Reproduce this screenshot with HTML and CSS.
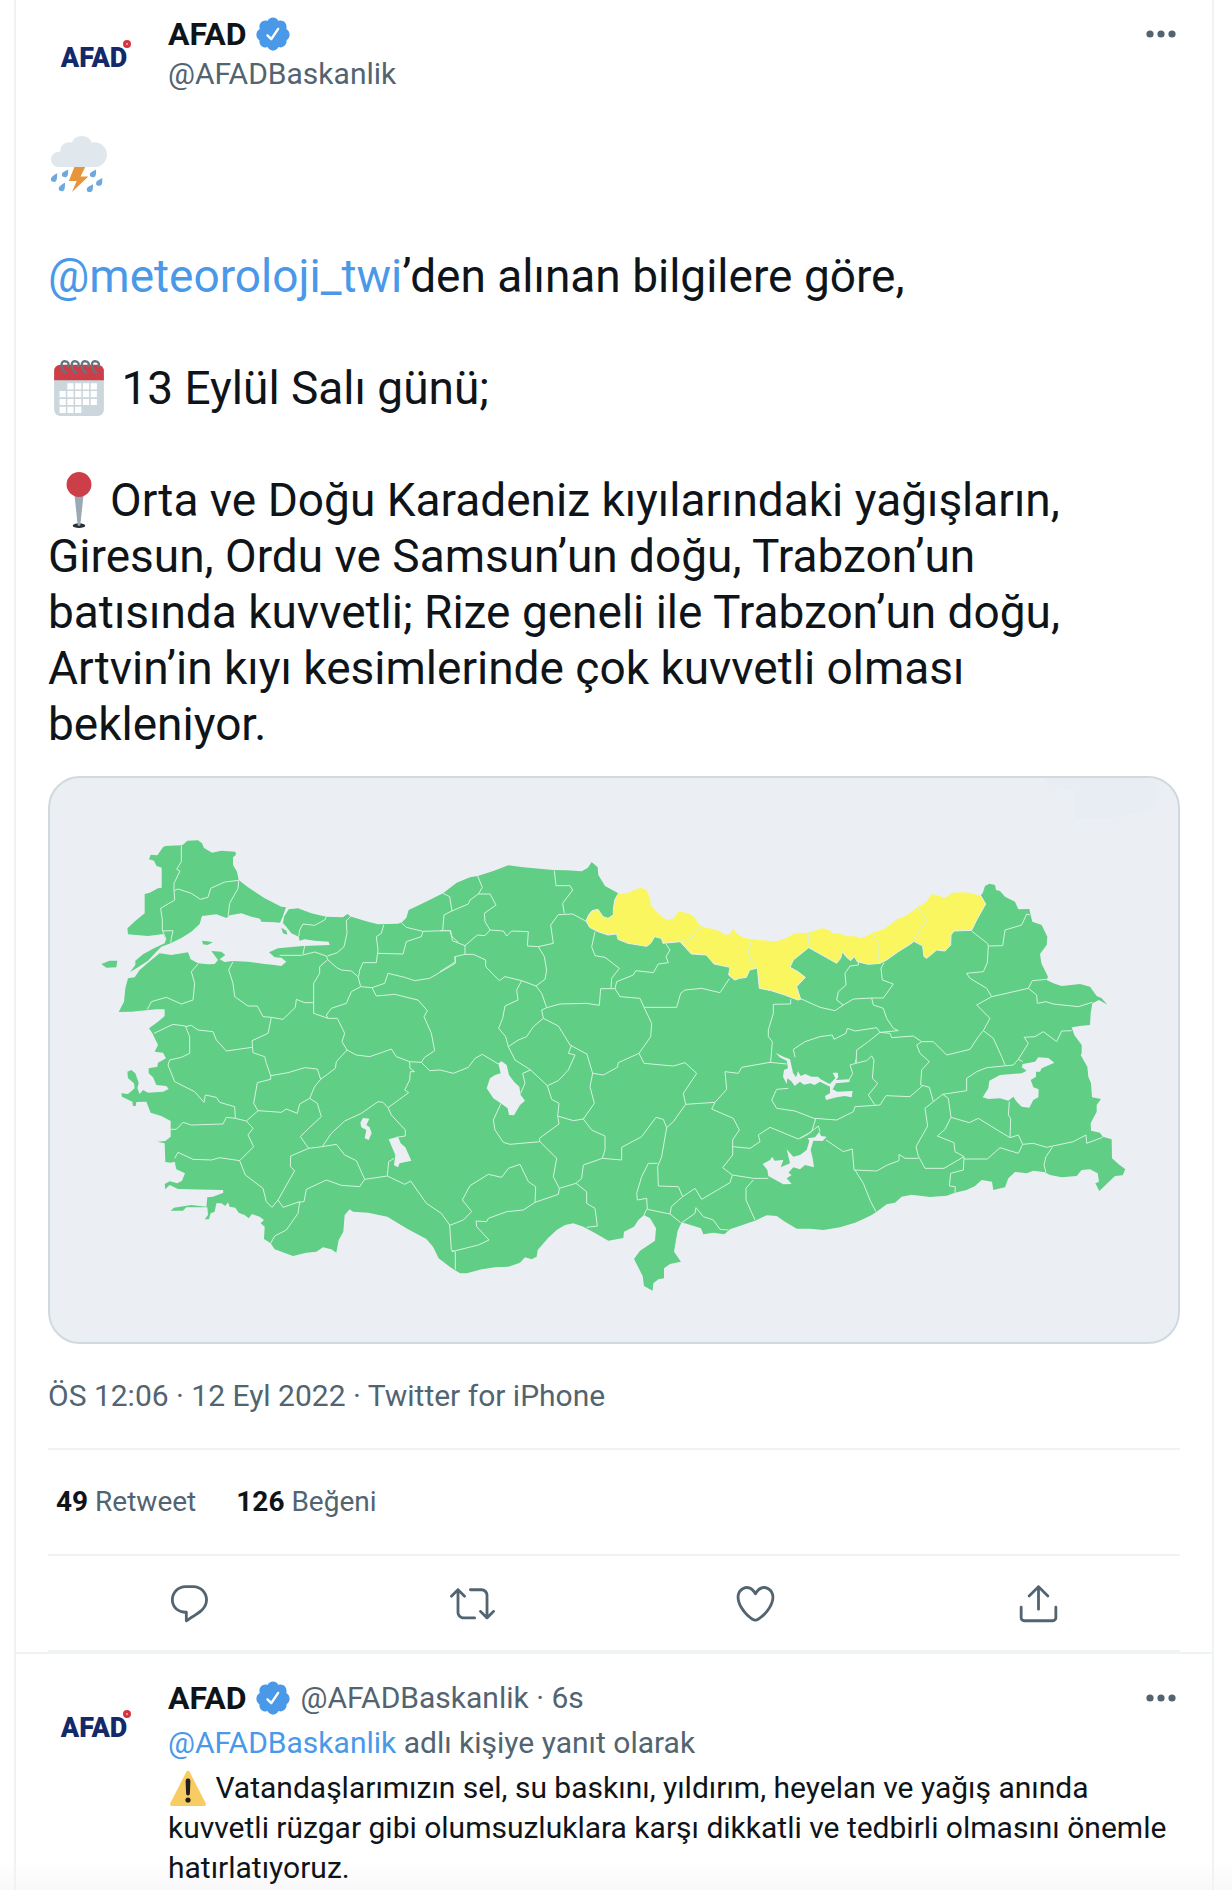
FILE: index.html
```html
<!DOCTYPE html>
<html lang="tr">

<head>
  <meta charset="UTF-8" />
  <meta name="viewport" content="width=device-width, initial-scale=1.0" />
  <title>AFAD (@AFADBaskanlik)</title>
  <link rel="stylesheet" href="styles.css">
</head>

<body>

  <!-- shared icons -->
  <svg class="sprite" aria-hidden="true">
    <symbol id="verified" viewBox="0 0 24 24">
      <path d="M22.5 12.5c0-1.58-.875-2.95-2.148-3.6.154-.435.238-.905.238-1.4 0-2.21-1.71-3.998-3.818-3.998-.47 0-.92.084-1.336.25C14.818 2.415 13.51 1.5 12 1.5s-2.816.917-3.437 2.25c-.415-.165-.866-.25-1.336-.25-2.11 0-3.818 1.79-3.818 4 0 .494.083.964.237 1.4-1.272.65-2.147 2.018-2.147 3.6 0 1.495.782 2.798 1.942 3.486-.02.17-.032.34-.032.514 0 2.21 1.708 4 3.818 4 .47 0 .92-.086 1.335-.25.62 1.334 1.926 2.25 3.437 2.25 1.512 0 2.818-.916 3.437-2.25.415.163.865.248 1.336.248 2.11 0 3.818-1.79 3.818-4 0-.174-.012-.344-.033-.513 1.158-.687 1.943-1.99 1.943-3.484zm-6.616-3.334l-4.334 6.5c-.145.217-.382.334-.625.334-.143 0-.288-.04-.416-.126l-.115-.094-2.415-2.415c-.293-.293-.293-.768 0-1.06s.768-.294 1.06 0l1.77 1.767 3.825-5.74c.23-.345.696-.436 1.04-.207.346.23.44.696.21 1.04z" />
    </symbol>
    <symbol id="more" viewBox="0 0 30 8">
      <circle cx="4" cy="4" r="3.6" />
      <circle cx="15" cy="4" r="3.6" />
      <circle cx="26" cy="4" r="3.6" />
    </symbol>
  </svg>

  <main class="timeline">

    <article class="tweet">
      <header class="tweet-header">
        <div class="avatar"><span class="avatar-logo">AFAD<i class="avatar-flag"></i></span></div>
        <div class="author">
          <div class="author-line"><strong>AFAD</strong><svg class="verified"><use href="#verified" /></svg></div>
          <div class="handle">@AFADBaskanlik</div>
        </div>
        <button class="more-btn" aria-label="Daha fazla"><svg><use href="#more" /></svg></button>
      </header>

      <p class="tweet-text">
        <svg class="emoji" viewBox="0 0 36 36">
          <path fill="#e1e8ed" d="M28 4c-.6 0-1.300.100-1.900.200C25.500 1.800 22.800 0 19.700 0c-3 0-5.500 1.800-6.200 4.200-.6-.2-1.200-.2-1.800-.2C8.500 4 6 6.400 6 9.300v.8C2.600 9.700 0 12 0 15c0 2.800 2.200 5 5 5h23c4.400 0 8-3.600 8-8s-3.600-8-8-8z" />
          <path fill="#e6953a" d="M15 20h7l-3 6h5L13.500 36l3-7h-5z" />
          <path fill="#6fa8de" d="M4 24c0 3 0 5.500-2 5.500S0 28.500 0 27.500 2 25 4 24zM11 21.500c0 3 0 5-2 5S7 25.500 7 24.500s2-2 4-3zM9 30c0 3 0 5.500-2 5.500S5 34.500 5 33.500 7 31 9 30zM29 21.500c0 3 0 5-2 5S25 25.500 25 24.500s2-2 4-3zM33 27c0 3 0 5-2 5S29 31 29 30s2-2 4-3zM27 31c0 3 0 5-2 5S23 35 23 34s2-2 4-3z" />
        </svg><br>
        <br>
        <a href="#">@meteoroloji_twi</a>’den alınan bilgilere göre,<br>
        <br>
        <svg class="emoji" viewBox="0 0 36 36">
          <path fill="#ccd6dd" d="M34 32a4 4 0 0 1-4 4H6a4 4 0 0 1-4-4V10h32z" />
          <path fill="#cc3f48" d="M34 13V7a4 4 0 0 0-4-4H6a4 4 0 0 0-4 4v6z" />
          <path fill="#fff" d="M10.500 15h4v4h-4zM15.500 15h4v4h-4zM20.500 15h4v4h-4zM25.500 15h4v4h-4zM5.500 20h4v4h-4zM10.500 20h4v4h-4zM15.500 20h4v4h-4zM20.500 20h4v4h-4zM25.500 20h4v4h-4zM5.500 25h4v4h-4zM10.500 25h4v4h-4zM15.500 25h4v4h-4zM20.500 25h4v4h-4zM25.500 25h4v4h-4zM5.500 30h4v4h-4zM10.500 30h4v4h-4zM15.500 30h4v4h-4z" />
          <path fill="none" stroke="#66757f" stroke-width="1.500" stroke-linecap="round" d="M9.500 8C7 7 5.500 1 8.500.8s3 2.200 2.500 3.200M16 8c-2.500-1-4-7-1-7.200s3 2.200 2.500 3.200M22.500 8c-2.500-1-4-7-1-7.200s3 2.200 2.500 3.200M29 8c-2.500-1-4-7-1-7.200s3 2.200 2.500 3.200" />
        </svg> 13 Eylül Salı günü;<br>
        <br>
        <svg class="emoji" viewBox="0 0 36 36">
          <ellipse fill="#292f33" cx="18" cy="34.500" rx="4" ry="1.500" />
          <path fill="#99aab5" d="M15 14h6l-2.200 20.500h-1.600z" />
          <circle fill="#cc3f48" cx="18" cy="8" r="8" />
        </svg>Orta ve Doğu Karadeniz kıyılarındaki yağışların,<br>
        Giresun, Ordu ve Samsun’un doğu, Trabzon’un<br>
        batısında kuvvetli; Rize geneli ile Trabzon’un doğu,<br>
        Artvin’in kıyı kesimlerinde çok kuvvetli olması<br>
        bekleniyor.
      </p>

      <div class="media">
        <svg class="map" viewBox="6 24 3384 1692" role="img" aria-label="Türkiye uyarı haritası">
          <path class="map-haze" d="M2981 24h345v80q-50 42-245 42V60q-60 0-100-36z" />

          <g class="land">
            <!-- Trakya -->
            <path d="M303 268L308 254 328 256 345 232 352 228 398 226 405 224 418 212 450 211 462 220 468 234 492 248 520 242 562 245 564 254 555 262 555 285 567 305 572 330 600 352 650 385 700 410 714 412 704 440 696 458 680 457 640 455 636 446 610 440 580 430 545 436 536 444 505 433 462 438 455 462 430 485 400 504 368 520 340 530 325 545 300 572 270 592 246 606 262 585 262 572 285 553 318 535 350 520 354 508 345 492 300 498 240 493 238 475 265 450 290 430 290 372 305 368 330 355 341 353 341 293 325 287 318 272z" />
            <!-- Anadolu -->
            <path d="M722 418L750 415 790 430 835 440 885 442 898 432 910 440 960 455 990 463 1050 461 1062 457 1075 443 1082 420 1120 402 1185 370 1226 338 1266 322 1289 318 1336 303 1381 286 1426 292 1516 300 1556 301 1601 304 1619 294 1631 276 1649 292 1651 315 1671 348 1711 370
              1736 400 1800 440 1860 470 1966 490 2046 510 2126 530 2221 520 2326 500 2436 520 2511 500 2608 440 2691 400 2798 376
              2804 370 2811 348 2824 341 2841 345 2844 360 2856 363 2871 380 2901 395 2911 418 2944 417 2948 435 2953 455 2981 465 2998 500 2996 525 2976 552 2980 580 3000 620 2996 630 3016 640 3041 648 3096 642 3126 650 3146 678 3161 685 3178 704 3153 690 3133 700 3128 730 3126 765 3101 767 3071 772 3079 795 3101 825 3101 850
              3098 855 3118 890 3121 920 3129 940 3132 982 3159 987 3146 1005 3146 1025 3128 1060 3129 1082 3156 1088 3164 1100 3191 1108 3192 1165 3211 1182 3232 1198 3224 1216 3201 1218 3176 1242 3154 1263 3142 1240 3153 1235 3149 1210 3126 1198 3101 1200 3086 1218 3041 1222 3006 1215 2991 1207 2956 1202 2936 1210 2901 1206 2881 1225 2871 1252 2836 1260 2832 1235 2801 1230 2781 1248 2756 1260 2721 1268 2696 1277 2646 1281 2591 1274 2561 1280 2541 1298 2516 1303 2486 1325 2471 1335 2451 1345 2421 1358 2376 1372 2326 1380
              2286 1376 2246 1376 2211 1355 2186 1338 2156 1336 2121 1352 2046 1378 2029 1393 1996 1388 1966 1393 1959 1375 1901 1357 1889 1382 1884 1410 1878 1445 1899 1475 1866 1482 1848 1495 1848 1525 1831 1528 1816 1540 1814 1562 1788 1548 1784 1518 1758 1467 1776 1442 1821 1412 1824 1375 1806 1345 1788 1335 1771 1350 1758 1370 1728 1385 1726 1404 1681 1412 1646 1392 1606 1370 1576 1360 1551 1365 1526 1380 1501 1403 1469 1440 1466 1460 1451 1468 1431 1462 1416 1478 1381 1490 1341 1492 1301 1498 1256 1510 1236 1510 1205 1490
              1172 1465 1155 1430 1135 1407 1075 1375 1018 1340 960 1328 915 1325 905 1318 890 1335 886 1385 872 1410 865 1448 850 1438 825 1432 805 1445 775 1448 735 1458 680 1438 668 1420 648 1407 650 1370 638 1360 648 1350 635 1340 612 1332 602 1345 590 1335 572 1328 562 1313 545 1310 540 1297 532 1308 520 1300 505 1300 500 1325 488 1330 483 1348 470 1348 480 1335 478 1312 415 1312 405 1322 368 1322 378 1313 430 1305 475 1310 478 1282 495 1280 526 1268 525 1260 390 1257 365 1245 352 1258 350 1242 365 1234 388 1240 402 1232 411 1210 385 1198 380 1175 368 1178 352 1176 350 1120 328 1115 352 1113 368 1100 368 1053 340 1038 308 1028 295 995 265 996 263 1008 255 1008 253 995 222 980 220 970 240 972 260 955 258 940 240 925 238 905 250 900 262 910 272 938 268 955 275 972 285 960 300 968 345 965 362 957 355 948 325 945 315 922 302 910 302 895 328 890 330 878 354 865
              345 848 320 845 330 825 318 800 313 790 303 775 330 755 350 738 350 718 325 718 250 725 212 726 228 695 232 655 240 625 260 622 275 600 310 570 335 550 370 555 420 547 428 568 450 580 480 583 500 582 510 570 490 543 520 545 532 555 515 568 530 576 555 573 600 575 650 582 680 585 700 588 715 575 700 563 680 562 663 547 690 535 765 528 845 525 842 515 800 512 770 508 755 512 752 500 730 490 715 470 705 460 708 440z" />
            <!-- adalar -->
            <path d="M160 582L185 572 208 572 205 592 175 593zM462 512L478 514 495 517 478 525 465 523zM700 473L715 482 718 494 705 490z" />
          </g>

          <path class="warning" d="M1711 370L1736 368 1776 352 1796 358 1808 385 1810 405 1831 430 1856 448 1876 445 1891 423 1921 428 1941 440 1951 460 1966 470 2006 478 2034 494 2046 490 2056 474 2068 490 2086 502 2126 508 2186 513 2221 500 2236 490 2281 486 2301 480 2326 473 2346 480 2356 490 2376 488 2396 498 2421 497 2436 503 2456 497 2474 487 2511 474 2546 447 2576 435 2608 410 2634 395 2651 370 2691 382 2714 367 2746 365 2776 370 2798 376
            2813 402 2786 450 2771 481 2718 483 2709 495 2708 525 2691 543 2666 540 2636 565 2628 560 2624 528 2598 514 2591 520 2551 545 2516 570 2496 580 2461 583 2428 575 2419 560 2408 572 2394 560 2383 545 2378 565 2366 580 2286 535 2282 533 2236 570 2226 592 2250 605 2272 622 2246 650 2258 688 2250 690 2210 675 2170 662 2134 655 2128 594 2105 600 2095 622 2075 625 2060 630 2042 615 2046 592 1998 582 1975 555 1930 552 1896 515 1845 520 1840 505 1820 500 1808 520 1796 529 1740 520 1710 508 1706 492 1680 495 1650 485 1625 472 1614 453 1622 435 1632 422 1650 418 1665 440 1680 445 1696 435 1696 420 1700 390z" />

          <g class="lakes">
            <path d="M1351 880L1361 874 1376 885 1383 915 1398 935 1414 950 1418 975 1431 992 1416 1005 1398 1036 1383 1035 1379 1015 1356 998 1336 985 1316 955 1326 925 1341 915 1358 910z" />
            <path d="M937 1058L945 1044 964 1046 955 1065 965 1072 971 1090 962 1110 950 1105 955 1080 940 1072z" />
            <path d="M1022 1108L1050 1100 1058 1120 1072 1132 1090 1172 1055 1180 1050 1192 1038 1186 1042 1155z" />
            <path d="M2804 982L2821 955 2824 932 2856 915 2921 910 2936 902 2921 892 2924 882 2961 875 2971 862 3001 864 3019 878 2981 895 2976 905 2964 905 2964 920 2948 930 2956 952 2972 958 2971 982 2956 990 2944 1013 2921 1010 2906 995 2896 980 2881 992 2856 985 2821 987z" />
            <path d="M2183 848L2206 860 2226 868 2231 890 2235 908 2244 922 2250 904 2258 918 2272 912 2290 920 2310 920 2318 928 2345 942 2362 925 2354 908 2369 908 2371 922 2364 930 2406 928 2404 936 2364 940 2354 958 2368 965 2414 963 2411 982 2390 978 2366 982 2334 990 2331 978 2346 970 2346 950 2316 935 2300 945 2286 940 2268 944 2256 935 2240 948 2230 934 2218 925 2216 942 2205 920 2208 900 2220 895 2216 872 2195 862z" />
            <path d="M2144 1182L2166 1170 2173 1160 2179 1172 2206 1170 2198 1192 2226 1180 2216 1138 2236 1160 2256 1155 2276 1140 2284 1112 2279 1105 2301 1102 2314 1085 2319 1098 2336 1100 2324 1113 2296 1112 2288 1140 2294 1165 2298 1192 2271 1185 2256 1198 2236 1192 2221 1208 2231 1215 2216 1225 2231 1242 2206 1243 2161 1218 2158 1200z" />
          </g>

          <!-- il sınırları -->
          <g class="borders">
            <path d="M400 226V275L386 298 396 303 378 340V358L380 390 338 415 343 450V480L354 508M378 362L390 357 430 370 457 388 480 382 488 355 530 336 572 331 570 355 545 400 540 440M343 483L375 482 370 505 368 518" />
            <path d="M835 440L830 450 800 466 765 462 755 480 752 500M910 437L895 452 897 490 888 530 868 548 838 558M695 556H760L800 546 835 558 840 570 865 592 880 600 910 603 930 620 938 650 972 653M765 552L770 528M1007 465L1000 490 985 500 990 540 985 578H945L935 600 932 620M1060 458L1075 472 1125 484 1120 500 1075 515 1065 552 990 550M1125 484L1190 482 1205 482 1212 500 1230 516M1185 370L1205 380 1212 424" />
            <path d="M838 570L815 590V610L797 640V730L840 745H868L890 790 882 815 897 840M938 650L910 665 895 700 850 715 835 735 840 745M972 653L1010 640 1020 610 1070 622 1100 632 1145 625 1222 580 1220 560M972 653L985 678 1040 673 1110 690 1138 722 1128 740 1150 790 1160 842 1130 862 1120 877" />
            <path d="M450 582L430 605 440 640 435 690 400 702 355 682 310 695 298 718M555 575L542 600 555 640 560 680 600 708H628L645 740 670 742 705 748 742 712 745 688 770 698H797M670 742L660 790 612 812 615 848 650 860 655 880 668 917M318 790L375 763 412 768 425 800V850L400 862 365 870 360 885 380 935 440 965 468 997 472 975 505 982 515 997 560 1010 562 1045M412 770L430 766 450 780 495 785 505 810 535 843 612 832M897 840L925 855 965 860 1000 848 1030 837 1045 860 1085 875 1120 877 1145 902 1176 900" />
          </g>
          <g class="borders" transform="translate(0 810)">
            <path d="M368 268L385 268 405 247 430 255 525 252 535 232 562 235 595 243 615 265 600 285 617 320 575 362 515 353 490 360 435 358 390 337 380 355M668 107L720 98 770 83 808 87 818 118 800 140 785 175 755 192 748 220 715 207 700 217 630 212 617 190 628 128 668 118V107M630 212L595 243M897 30L865 65 862 85 818 118" />
            <path d="M785 175L808 190 820 230 785 262 757 290 782 325 728 348 727 380 740 392 690 480 705 502 755 485 750 520 715 570 680 588 668 610M575 362L592 405 645 445 655 485 672 502 690 480M782 325L823 320 865 313 890 345 925 362 950 418 935 440 880 436 835 420 775 448 768 485 752 487M823 320L850 280 890 243 940 220 990 185 1005 187 1020 203 1030 225 1072 270V288L1045 292M1020 203L1082 158 1070 150 1085 120 1087 95H1100L1086 85 1085 65M950 418L1018 408 1022 365 1038 355M1018 408L1070 433 1088 423 1135 490 1180 520 1205 555 1210 630 1222 636V688" />
          </g>
          <g class="borders" transform="translate(1176 0)">
            <path d="M113 318L127 352 115 372 90 390 85 402 35 423 12 435 8 480M115 372H150L168 405 133 430 135 455 150 480M343 302L348 347H390L398 360 368 400 373 430M437 453L398 432 355 434 332 465 340 520 295 530M0 482H32L37 512 75 527V552M75 527L112 495 135 497 150 480 190 483 200 498 215 483 265 485 262 528 295 530 313 560 320 600 315 628 288 648 245 632 195 620 178 632 137 590V570L100 553H75L45 560 47 575 0 605" />
            <path d="M245 632L230 660 234 690 195 708 188 745 176 775 197 800 205 830M288 648L305 670 320 713 360 702 440 700 478 706 482 656H525L540 680 600 685 612 712H710L722 670 735 660 785 655 840 668 868 626M525 656L530 635 580 615 587 602 640 608 655 582 685 578 678 560 690 540 678 522M465 485L455 530 465 557 495 562 538 595 515 625 513 656M320 713L305 720 310 745 280 770 260 800 235 810 205 830M310 745L355 768 375 800 390 825 440 852M612 712L635 760 632 800 597 850M1052 688V702L1000 703V730L985 780V800L997 815 992 877M1082 686L1140 712 1185 722" />
          </g>
          <g class="borders" transform="translate(2256 0)">
            <path d="M105 722L130 705 160 687 215 684H250L280 642 247 630 243 595 252 578M130 705L110 690 115 665 138 645 135 610 150 588 175 585V575M215 684L220 705 250 715 260 745 280 775 295 782 240 787 205 815 170 840 168 880M-15 862L-20 838 15 815 60 800 97 795 102 808 138 790 142 775 165 783 230 773 240 787M240 787L270 790 275 803 340 798 365 815 400 815 440 855 510 838 535 800 550 782M365 815L350 825 360 850 388 875" />
            <path d="M515 483L562 520 565 528 562 578 550 605 500 610 510 625 560 655 575 680 530 705 570 745 550 782 580 805 605 860 615 885M565 528L608 527 615 480 665 465 680 432 690 435M575 680L685 655 697 632 740 628M685 655L710 675 712 700 738 695 760 702 835 710 877 697M815 782L785 783 770 815 730 785 705 800 672 802 685 820 655 868" />
          </g>
          <g class="borders" transform="translate(1176 810)">
            <path d="M0 90L40 100 85 82 105 55 127 43 175 72M205 20L225 60 272 90 322 137 335 178 357 190 353 228 400 242 430 237 455 270 495 288V330L487 355 430 375 425 415 408 430 358 445M272 90L248 100 255 130 242 160M183 190L160 240 165 270 190 307 210 313 300 305 298 295 357 252 353 228M300 305L350 355 340 410 358 445 355 463 285 487M322 137L355 122 385 90 405 45 385 40 395 15M440 40L458 100 450 140 463 190 430 237M458 100L490 105 532 82 535 68 597 40 612 70 700 78 735 68 770 100 730 160 737 193 700 245 680 263" />
            <path d="M737 193L825 187 860 148 855 95 895 100 905 82 990 67 1040 72M825 187L815 207 880 235 898 270 878 300V345L848 383 877 405 870 428 785 478 765 445 728 470 715 440 655 438 653 380 665 350 680 263 670 238 648 232 605 290 545 322V360L487 355M878 320L930 325 960 305 955 285 990 262 1075 297 1115 275 1127 237M1045 145L1010 148 995 180 1010 205 1065 213 1127 237M877 405L940 415 985 415M940 420L918 445V480L945 540" />
            <path d="M653 370H625L605 410 590 460 592 480 620 475 622 508 690 522 694 500 728 470M690 522L722 548M612 525L620 508M725 548L765 520 768 503 790 530 820 540 840 568 865 570M408 430L440 455V490L465 505 472 558 440 562M285 487L250 510 200 515 145 535 140 545 108 543 110 560 147 600 115 615 35 635M285 487L287 440 265 425 240 373 205 385 185 412 145 403 90 437 67 480 95 515 70 540 27 557" />
          </g>
          <g class="borders" transform="translate(2256 810)">
            <path d="M168 58L167 70 200 62 215 48 222 60 217 115 233 130 205 165 225 195M167 70L150 75 158 100 148 118M45 235L110 240 160 215 165 200 240 195 258 167 330 170 368 137M388 65L365 90 362 135 388 142 400 185 375 205 383 258 348 320 355 348 375 385H432L492 350M400 185L428 163 500 152V115L530 95 560 83 640 75 655 58 668 65M428 163L445 175 453 232 435 268 412 288 462 308 465 335 492 350 490 390 452 400 448 438 466 440 465 458" />
            <path d="M453 232L508 248 535 235 600 275 630 293 632 235 625 225 628 185M630 293L655 285 668 313 655 340 600 323 562 357H492M668 313L700 310 740 322 820 305 858 285 860 310 908 292M757 322L738 350 732 375 738 397M60 275L55 258 20 285 0 295M78 300L130 335 157 327 162 390 230 393 262 375 297 362V343L315 355H355M165 390L190 430 212 485 228 515" />
          </g>
          <path class="borders" d="M1896 515L1930 505 1950 478 1966 470M2112 508L2100 545 2110 575 2128 594M2281 486V515L2286 535M2474 487L2490 520V560L2496 580M2608 410L2636 450 2610 490 2596 514" />
        </svg>
      </div>

      <div class="tweet-meta">ÖS 12:06 · 12 Eyl 2022 · Twitter for iPhone</div>

      <div class="tweet-stats">
        <span><strong>49</strong> Retweet</span>
        <span><strong>126</strong> Beğeni</span>
      </div>

      <div class="tweet-actions">
        <button aria-label="Yanıtla">
          <svg viewBox="0 0 24 24"><path d="M14.046 2.242l-4.148-.01h-.002c-4.374 0-7.8 3.427-7.8 7.802 0 4.098 3.186 7.206 7.465 7.37v3.828c0 .108.044.286.12.403.142.225.384.347.632.347.138 0 .277-.038.402-.118.264-.168 6.473-4.14 8.088-5.506 1.902-1.61 3.04-3.97 3.043-6.312v-.017c-.006-4.367-3.43-7.787-7.8-7.788zm3.787 12.972c-1.134.96-4.862 3.405-6.772 4.643V16.67c0-.414-.335-.75-.75-.75h-.396c-3.66 0-6.318-2.476-6.318-5.886 0-3.534 2.768-6.302 6.3-6.302l4.147.01h.002c3.532 0 6.3 2.766 6.302 6.296-.003 1.91-.942 3.844-2.514 5.176z" /></svg>
        </button>
        <button aria-label="Retweetle">
          <svg viewBox="0 0 24 24"><path d="M23.77 15.67c-.292-.293-.767-.293-1.06 0l-2.22 2.22V7.65c0-2.068-1.683-3.75-3.75-3.75h-5.85c-.414 0-.75.336-.75.75s.336.75.75.75h5.85c1.24 0 2.25 1.01 2.25 2.25v10.24l-2.22-2.22c-.293-.293-.768-.293-1.06 0s-.294.768 0 1.06l3.5 3.5c.145.147.337.22.53.22s.383-.072.53-.22l3.5-3.5c.294-.292.294-.767 0-1.06zm-10.66 3.28H7.26c-1.24 0-2.25-1.01-2.25-2.25V6.46l2.22 2.22c.148.147.34.22.532.22s.384-.073.53-.22c.293-.293.293-.768 0-1.06l-3.5-3.5c-.293-.294-.768-.294-1.06 0l-3.5 3.5c-.294.292-.294.767 0 1.06s.767.293 1.06 0l2.22-2.22V16.7c0 2.068 1.683 3.75 3.75 3.75h5.85c.414 0 .75-.336.75-.75s-.337-.75-.75-.75z" /></svg>
        </button>
        <button aria-label="Beğen">
          <svg viewBox="0 0 24 24"><path d="M12 21.638h-.014C9.403 21.59 1.95 14.856 1.95 8.478c0-3.064 2.525-5.754 5.403-5.754 2.29 0 3.83 1.58 4.646 2.73.814-1.148 2.354-2.73 4.645-2.73 2.88 0 5.404 2.69 5.404 5.755 0 6.376-7.454 13.11-10.037 13.157H12zM7.354 4.225c-2.08 0-3.903 1.988-3.903 4.255 0 5.74 7.034 11.596 8.55 11.658 1.518-.062 8.55-5.917 8.55-11.658 0-2.267-1.823-4.255-3.903-4.255-2.528 0-3.94 2.936-3.952 2.965-.23.562-1.156.562-1.387 0-.014-.03-1.425-2.965-3.954-2.965z" /></svg>
        </button>
        <button aria-label="Paylaş">
          <svg viewBox="0 0 24 24"><path d="M17.53 7.47l-5-5c-.293-.293-.768-.293-1.06 0l-5 5c-.294.293-.294.768 0 1.06s.767.294 1.06 0l3.72-3.72V15c0 .414.336.75.75.75s.75-.336.75-.75V4.81l3.72 3.72c.146.147.338.22.53.22s.384-.072.53-.22c.293-.293.293-.767 0-1.06z" /><path d="M19.708 21.944H4.292C3.028 21.944 2 20.916 2 19.652V14c0-.414.336-.75.75-.75s.75.336.75.75v5.652c0 .437.355.792.792.792h15.416c.437 0 .792-.355.792-.792V14c0-.414.336-.75.75-.75s.75.336.75.75v5.652c0 1.264-1.028 2.292-2.292 2.292z" /></svg>
        </button>
      </div>
    </article>

    <article class="tweet reply">
      <div class="avatar"><span class="avatar-logo">AFAD<i class="avatar-flag"></i></span></div>
      <div class="reply-body">
        <div class="author-line">
          <strong>AFAD</strong><svg class="verified"><use href="#verified" /></svg>
          <span class="handle">@AFADBaskanlik · 6s</span>
          <button class="more-btn" aria-label="Daha fazla"><svg><use href="#more" /></svg></button>
        </div>
        <div class="handle"><a href="#">@AFADBaskanlik</a> adlı kişiye yanıt olarak</div>
        <p class="reply-text">
          <svg class="emoji" viewBox="0 0 36 36">
            <path fill="#f7cd63" d="M16.300 2Q18-1 19.700 2L35.600 33Q36.500 36 34 36H2Q-.5 36 .4 33z" />
            <path fill="#231f20" d="M15.600 11a2.400 2.400 0 0 1 4.800 0l-.5 12.500a1.900 1.900 0 0 1-3.800 0z" />
            <circle fill="#231f20" cx="18" cy="30" r="2.600" />
          </svg> Vatandaşlarımızın sel, su baskını, yıldırım, heyelan ve yağış anında kuvvetli rüzgar gibi olumsuzluklara karşı dikkatli ve tedbirli olmasını önemle hatırlatıyoruz.
        </p>
      </div>
    </article>

  </main>

</body>

</html>
```
FILE: styles.css
```css
* {
  box-sizing: border-box;
}

body {
  margin: 0;
  min-height: 100vh;
  background: linear-gradient(to top, #f8f8fa, #fff 30px);
  color: #0f1419;
  font-family: Roboto, "Noto Sans", sans-serif;
  font-size: 30px;
  line-height: 40px;
}

a {
  color: #4a99e9;
  text-decoration: none;
}

p {
  margin: 0;
}

button {
  padding: 0;
  border: none;
  background: none;
  color: #536471;
  cursor: pointer;
}

svg {
  fill: currentColor;
}

.sprite {
  display: none;
}

.timeline {
  min-height: 100vh;
  margin: 0 18px 0 14px;
  border-left: 2px solid #eff3f4;
  border-right: 2px solid #eff3f4;
}

.tweet {
  padding: 8px 32px 0;
}

.tweet-header {
  display: flex;
  gap: 24px;
}

.avatar {
  display: flex;
  flex: none;
  align-items: center;
  justify-content: center;
  width: 96px;
  height: 96px;
  padding: 4px 4px 0 0;
  border-radius: 50%;
}

.avatar-logo {
  position: relative;
  color: #14296a;
  font-size: 27px;
  font-weight: 900;
}

.avatar-flag {
  position: absolute;
  top: 2px;
  right: -4px;
  width: 8px;
  height: 8px;
  border: 3px solid #d8333f;
  border-radius: 50%;
  background: #f3b5b9;
}

.author {
  flex: 1;
  padding-top: 6px;
}

.author-line {
  display: flex;
  align-items: center;
  height: 40px;
}

.author-line strong {
  font-size: 32px;
}

.verified {
  width: 38px;
  height: 38px;
  margin: 0 8px;
  color: #4a99e9;
}

.handle {
  color: #536471;
}

.more-btn {
  display: flex;
  align-items: center;
  height: 40px;
  margin-left: auto;
  padding-right: 4px;
}

.tweet-header .more-btn {
  margin-top: 6px;
}

.more-btn svg {
  width: 30px;
  height: 8px;
}

.tweet-text {
  margin-top: 32px;
  font-size: 46px;
  line-height: 56px;
}

.emoji {
  width: 56px;
  height: 56px;
  margin: 0 3px;
  vertical-align: top;
}

.media {
  margin-top: 24px;
  overflow: hidden;
  border: 2px solid #cfd9de;
  border-radius: 32px;
  background: #ebeff4;
}

.map {
  display: block;
  width: 100%;
}

.map-haze {
  fill: #e8edf4;
}

.land {
  fill: #61ce85;
}

.warning {
  fill: #f9f65f;
  stroke: #ebeff4;
  stroke-width: 3;
}

.lakes {
  fill: #ebeff4;
}

.borders {
  fill: none;
  stroke: #d3f3df;
  stroke-width: 3;
  stroke-linejoin: round;
}

.tweet-meta {
  padding: 32px 0;
  color: #536471;
}

.tweet-stats {
  display: flex;
  gap: 40px;
  padding: 32px 8px;
  border-top: 2px solid #eff3f4;
  border-bottom: 2px solid #eff3f4;
  color: #536471;
  font-size: 28px;
}

.tweet-stats strong {
  color: #0f1419;
}

.tweet-actions {
  display: flex;
  border-bottom: 2px solid #eff3f4;
}

.tweet-actions button {
  display: flex;
  flex: 1;
  align-items: center;
  justify-content: center;
  height: 94px;
}

.tweet-actions svg {
  width: 45px;
  height: 45px;
}

.reply {
  display: flex;
  gap: 24px;
  padding-top: 24px;
  border-top: 2px solid #eff3f4;
}

.reply-body {
  display: flex;
  flex: 1;
  flex-direction: column;
  gap: 5px;
}

.reply-text .emoji {
  width: 36px;
  height: 36px;
  margin: 2px 2px 0;
}
```
